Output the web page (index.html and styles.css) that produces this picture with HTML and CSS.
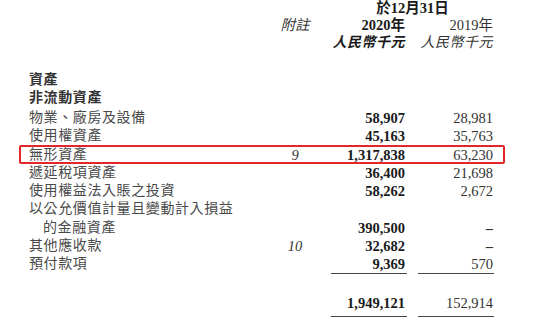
FILE: index.html
```html
<!DOCTYPE html>
<html lang="zh-Hant">
<head>
  <meta charset="UTF-8">
  <title>資產</title>
  <link rel="stylesheet" href="styles.css">
</head>
<body>

  <div class="sheet">

    <!-- column headings -->
    <div class="head">
      <div class="row period-row">
        <span class="label"></span>
        <span class="note"></span>
        <span class="period">於12月31日</span>
      </div>
      <div class="row">
        <span class="label"></span>
        <span class="note italic">附註</span>
        <span class="num cur">2020年</span>
        <span class="num prev">2019年</span>
      </div>
      <div class="row">
        <span class="label"></span>
        <span class="note"></span>
        <span class="num cur italic">人民幣千元</span>
        <span class="num prev italic">人民幣千元</span>
      </div>
    </div>

    <!-- section titles -->
    <div class="titles">
      <div class="title">資產</div>
      <div class="title">非流動資產</div>
    </div>

    <!-- line items -->
    <div class="items">
      <div class="row item">
        <span class="label">物業、廠房及設備</span>
        <span class="note"></span>
        <span class="num cur">58,907</span>
        <span class="num prev">28,981</span>
      </div>
      <div class="row item">
        <span class="label">使用權資產</span>
        <span class="note"></span>
        <span class="num cur">45,163</span>
        <span class="num prev">35,763</span>
      </div>
      <div class="row item marked">
        <span class="label">無形資產</span>
        <span class="note italic">9</span>
        <span class="num cur">1,317,838</span>
        <span class="num prev">63,230</span>
      </div>
      <div class="row item">
        <span class="label">遞延稅項資產</span>
        <span class="note"></span>
        <span class="num cur">36,400</span>
        <span class="num prev">21,698</span>
      </div>
      <div class="row item">
        <span class="label">使用權益法入賬之投資</span>
        <span class="note"></span>
        <span class="num cur">58,262</span>
        <span class="num prev">2,672</span>
      </div>
      <div class="row item">
        <span class="label">以公允價值計量且變動計入損益</span>
      </div>
      <div class="row item">
        <span class="label indent">的金融資產</span>
        <span class="note"></span>
        <span class="num cur">390,500</span>
        <span class="num prev dash">–</span>
      </div>
      <div class="row item">
        <span class="label">其他應收款</span>
        <span class="note italic">10</span>
        <span class="num cur">32,682</span>
        <span class="num prev dash">–</span>
      </div>
      <div class="row item ruled">
        <span class="label">預付款項</span>
        <span class="note"></span>
        <span class="num cur">9,369</span>
        <span class="num prev">570</span>
      </div>
    </div>

    <!-- total -->
    <div class="row item total ruled">
      <span class="label"></span>
      <span class="note"></span>
      <span class="num cur">1,949,121</span>
      <span class="num prev">152,914</span>
    </div>

  </div>

</body>
</html>
```

FILE: styles.css
```css
body {
  margin: 0;
  background: #ffffff;
  font-family: "Liberation Serif", "Noto Sans CJK TC", serif;
  color: #222;
}
.sheet {
  width: 550px;
  padding-left: 29px;
  box-sizing: border-box;
}
.row {
  display: flex;
  align-items: center;
  height: 18px;
  line-height: 18px;
  white-space: nowrap;
}
.label {
  flex: 0 0 246px;
  font-size: 14px;
  letter-spacing: 0.6px;
  color: #4a4a4a;
}
.indent {
  padding-left: 14px;
  box-sizing: border-box;
}
.note {
  flex: 0 0 40px;
  text-align: center;
  font-size: 14.5px;
  color: #333;
}
.italic {
  font-style: italic;
}
.num {
  flex: 0 0 76px;
  box-sizing: border-box;
  text-align: right;
  font-size: 14.5px;
}
.cur {
  margin-left: 16px;
  padding-right: 2px;
  font-weight: bold;
  color: #1a1a1a;
}
.prev {
  margin-left: 11px;
  padding-right: 1px;
  color: #333;
}
.dash {
  font-weight: bold;
}

/* headings */
.period-row {
  height: 16px;
  line-height: 16px;
}
.period {
  flex: 0 0 163px;
  margin-left: 16px;
  text-align: center;
  font-size: 14.5px;
  font-weight: bold;
  color: #1a1a1a;
}
.head .num.italic {
  font-size: 14px;
  letter-spacing: 0.5px;
}
.titles {
  margin-top: 19px;
  margin-bottom: 3px;
}
.title {
  height: 17.5px;
  line-height: 17.5px;
  font-size: 14px;
  font-weight: bold;
  letter-spacing: 0.6px;
  color: #333;
}

/* line items */
.item {
  height: 18.3px;
  line-height: 18.3px;
}
.marked {
  position: relative;
}
.marked::after {
  content: "";
  position: absolute;
  left: -10px;
  top: -1px;
  width: 486px;
  height: 19px;
  border: 2px solid #e3262a;
  border-radius: 2px;
  box-sizing: border-box;
}
.ruled .num {
  border-bottom: 1.3px solid #444;
}
.total {
  margin-top: 21px;
  height: 22px;
  line-height: 19px;
}
.total .num {
  padding-bottom: 3px;
}
```
